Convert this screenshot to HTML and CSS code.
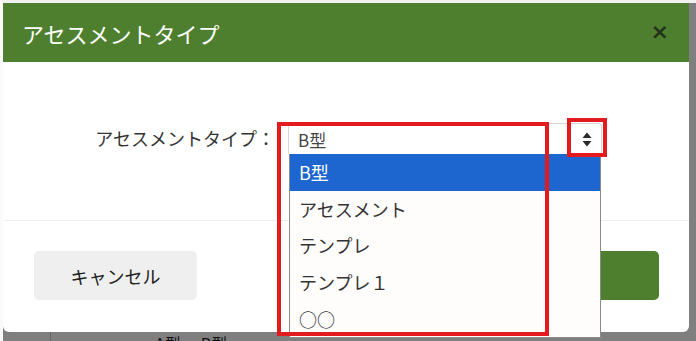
FILE: index.html
```html
<!DOCTYPE html>
<html>
<head>
    <meta charset="utf-8">
    <link rel="stylesheet" href="styles.css">
    <title>アセスメントタイプ</title>
</head>
<body>
    <div class="screen">
        <div class="modal">
            <div class="modal-header">
                <h2 class="modal-title">アセスメントタイプ</h2>
                <span class="close">&times;</span>
            </div>
            <div class="modal-body">
                <label class="field-label">アセスメントタイプ：</label>
                <div class="select">
                    <span class="select-value">B型</span>
                    <svg class="select-arrow" width="10" height="15" viewBox="0 0 10 15">
                        <path d="M5 0.5 L9.5 6 L0.5 6 Z" fill="#2b2b2b"/>
                        <path d="M5 14.5 L9.5 9 L0.5 9 Z" fill="#2b2b2b"/>
                    </svg>
                    <ul class="options">
                        <li class="active">B型</li>
                        <li>アセスメント</li>
                        <li>テンプレ</li>
                        <li>テンプレ１</li>
                        <li>○○</li>
                    </ul>
                </div>
            </div>
            <div class="modal-footer">
                <button class="btn btn-cancel">キャンセル</button>
                <button class="btn btn-ok">OK</button>
            </div>
        </div>
        <div class="behind">
            <span class="behind-cell">A型</span>
            <span class="behind-cell">B型</span>
        </div>

        <!-- annotation boxes -->
        <div class="mark mark-list"></div>
        <div class="mark mark-arrow"></div>
    </div>
</body>
</html>
```

FILE: styles.css
```css
body {
    margin: 0;
    background-color: #fbf9f9;
    font-family: "Noto Sans CJK JP", "Noto Sans", sans-serif;
    color: #333;
}
.screen {
    position: relative;
    height: 341px;
    overflow: hidden;
    background-color: #7f7f7f;
    border-top: 3px solid #f2f0f0;
    border-left: 3px solid #fbf9f9;
    box-sizing: border-box;
}
.modal {
    width: 686px;
    height: 329px;
    background-color: #fff;
    border-radius: 0 0 6px 6px;
}
.modal-header {
    height: 59px;
    background-color: #4e7f2f;
    display: flex;
    align-items: center;
    justify-content: space-between;
    padding: 0 20px 0 19px;
}
.modal-title {
    margin: 0;
    font-size: 22px;
    font-weight: normal;
    color: #fff;
}
.close {
    font-family: "DejaVu Sans", sans-serif;
    font-size: 22px;
    font-weight: bold;
    color: #23331a;
    margin-top: -2px;
}
.modal-body {
    height: 159px;
    box-sizing: border-box;
    padding: 61px 0 0 88px;
    display: flex;
    align-items: flex-start;
    border-bottom: 1px solid #eeeeee;
}
.field-label {
    width: 184px;
    text-align: right;
    font-size: 18px;
    line-height: 30px;
    color: #333;
    margin-right: 13px;
}
.select {
    position: relative;
    width: 314px;
    height: 31px;
    box-sizing: border-box;
    border: 1px solid #d6d6d6;
    border-bottom: none;
    border-radius: 4px 4px 0 0;
    display: flex;
    align-items: center;
    justify-content: space-between;
    padding: 0 9px 0 9px;
}
.select-value {
    font-size: 17px;
    color: #444;
}
.select-arrow {
    display: block;
}
.options {
    position: absolute;
    top: 30px;
    left: 0;
    right: 0;
    margin: 0;
    padding: 0;
    list-style: none;
    background-color: #fffcfc;
    border: 1px solid #8a8a8a;
    border-top: none;
    z-index: 2;
}
.options li {
    height: 36.7px;
    line-height: 36px;
    padding-left: 9px;
    font-size: 18px;
    color: #333;
}
.options li.active {
    background-color: #1d66d0;
    color: #fff;
}
.modal-footer {
    display: flex;
    justify-content: space-between;
    padding: 30px 30px 0 31px;
}
.btn {
    width: 163px;
    height: 49px;
    border: none;
    border-radius: 5px;
    font-family: inherit;
    font-size: 18px;
}
.btn-cancel {
    background-color: #efefef;
    color: #222;
}
.btn-ok {
    background-color: #4e7f2f;
    color: #fff;
}
.behind {
    display: flex;
    height: 9px;
    margin-left: 47px;
    border-left: 1px solid #666;
    padding-left: 104px;
    gap: 20px;
}
.behind-cell {
    font-size: 16px;
    line-height: 20px;
    margin-top: 1px;
    color: #111;
}
.mark {
    position: absolute;
    border: 4px solid #e31b1e;
    z-index: 3;
}
.mark-list {
    left: 274px;
    top: 119px;
    width: 264px;
    height: 206px;
}
.mark-arrow {
    left: 564px;
    top: 115px;
    width: 32px;
    height: 31px;
}
```
